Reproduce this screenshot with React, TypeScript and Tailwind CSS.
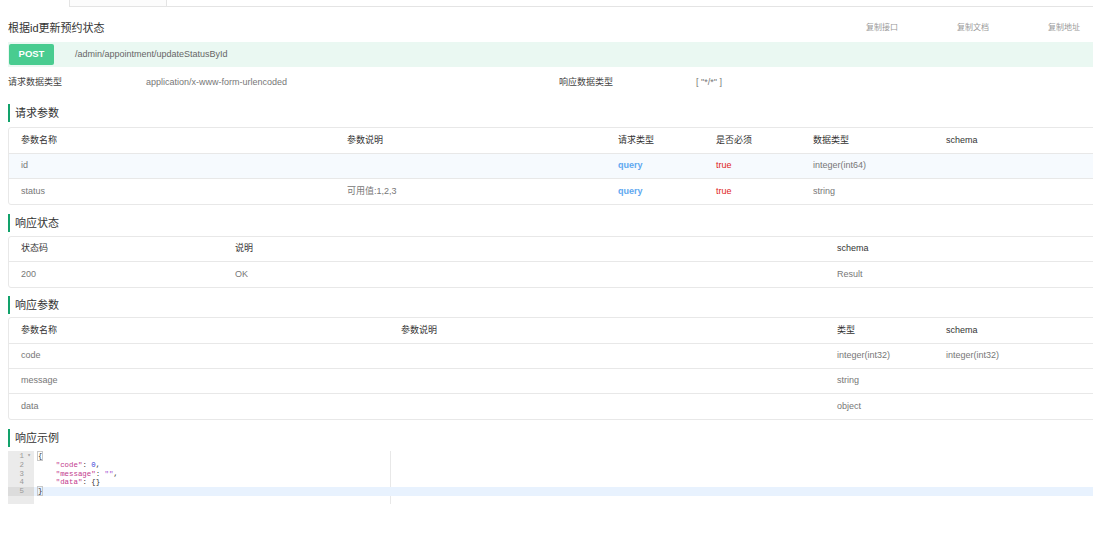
import React from "react";

const FONT = { fontFamily: '"Liberation Sans", "Noto Sans CJK SC", sans-serif' };
const MONO = { fontFamily: '"Liberation Mono", "DejaVu Sans Mono", monospace' };

function SectionTitle({ title, className }: { title: string; className: string }) {
  return (
    <div className={`flex items-center h-[18px] ${className}`}>
      <div className="w-[2px] h-full bg-[#12a26b]" />
      <span className="ml-[5px] text-[11px] leading-[18px] text-[#333]">{title}</span>
    </div>
  );
}

type Cell = { text: string; className?: string };

function Table({
  cols,
  head,
  rows,
  className,
  headH,
  highlight,
}: {
  cols: string;
  head: string[];
  rows: Cell[][];
  className: string;
  headH: string;
  highlight?: number;
}) {
  return (
    <div className={`w-[1100px] border border-[#e8e8e8] rounded-[3px] ${className}`}>
      <div className={`grid ${cols} ${headH} items-center pl-[12px] border-b border-[#e8e8e8] text-[9px] text-[#333]`}>
        {head.map((h, i) => (
          <div key={i}>{h}</div>
        ))}
      </div>
      {rows.map((r, ri) => (
        <div
          key={ri}
          className={`grid ${cols} h-[25px] items-center pl-[12px] text-[9px] text-[#777] ${ri < rows.length - 1 ? "border-b border-[#e8e8e8]" : ""} ${highlight === ri ? "bg-[#f6fafe]" : ""}`}
        >
          {r.map((c, ci) => (
            <div key={ci} className={c.className}>
              {c.text}
            </div>
          ))}
        </div>
      ))}
    </div>
  );
}

const codeLines = [
  <span className="text-[#333] outline outline-1 outline-[#c8c8c8]">{"{"}</span>,
  <>
    <span>{"    "}</span>
    <span className="text-[#c2398c]">"code"</span>
    <span className="text-[#333]">: </span>
    <span className="text-[#3b3bd6]">0</span>
    <span className="text-[#333]">,</span>
  </>,
  <>
    <span>{"    "}</span>
    <span className="text-[#c2398c]">"message"</span>
    <span className="text-[#333]">: </span>
    <span className="text-[#a64fd1]">""</span>
    <span className="text-[#333]">,</span>
  </>,
  <>
    <span>{"    "}</span>
    <span className="text-[#c2398c]">"data"</span>
    <span className="text-[#333]">: {"{}"}</span>
  </>,
  <span className="text-[#333] outline outline-1 outline-[#c8c8c8]">{"}"}</span>,
];

function Editor() {
  return (
    <div className="mt-[4px] ml-[8px] flex h-[53px] w-[1085px]" style={MONO}>
      <div className="w-[26px] bg-[#ebebeb] pt-[1px] text-[7.4px] leading-[8.75px] text-[#999]">
        {codeLines.map((_, i) => (
          <div key={i} className={`flex justify-end h-[8.75px] ${i === 4 ? "bg-[#dcdcdc]" : ""}`}>
            <span>{i + 1}</span>
            <span className="w-[10px] text-center text-[6px]">{i === 0 ? "▾" : ""}</span>
          </div>
        ))}
      </div>
      <div className="relative flex-1 pt-[1px] text-[7.4px] leading-[8.75px]">
        <div className="absolute left-[356px] top-0 bottom-0 w-[1px] bg-[#e8e8e8]" />
        {codeLines.map((l, i) => (
          <div key={i} className={`relative h-[8.75px] pl-[4px] whitespace-pre ${i === 4 ? "bg-[#e8f2fe]" : ""}`}>
            {l}
          </div>
        ))}
      </div>
    </div>
  );
}

export default function App() {
  const q = "text-[#5fa8f0] font-bold";
  const t = "text-[#e01b1b]";
  return (
    <div className="w-[1093px] h-[556px] overflow-hidden bg-white" style={FONT}>
      <div className="ml-[69px] h-[7px] border-b border-[#e4e4e4]">
        <div className="w-[98px] h-full border-l border-r border-[#e4e4e4] bg-[#fcfcfc]" />
      </div>

      <div className="flex items-start h-[35px] pt-[14px] pl-[8px]">
        <span className="text-[11px] leading-[14px] text-[#333]">根据id更新预约状态</span>
        <span className="ml-auto text-[8px] leading-[14px] text-[#999] mr-[59px]">复制接口</span>
        <span className="text-[8px] leading-[14px] text-[#999] mr-[59px]">复制文档</span>
        <span className="text-[8px] leading-[14px] text-[#999] mr-[13px]">复制地址</span>
      </div>

      <div className="ml-[8px] h-[25px] flex items-center bg-[#eaf8f2]">
        <div className="ml-[1px] w-[45px] h-[21px] bg-[#49cc90] rounded-[2px] flex items-center justify-center text-white text-[9.5px] font-bold">
          POST
        </div>
        <span className="ml-[21px] text-[9px] text-[#666]">/admin/appointment/updateStatusById</span>
      </div>

      <div className="h-[28px] flex items-center pt-[3px] pl-[8px] text-[9px] text-[#444]">
        <span className="w-[138px]">请求数据类型</span>
        <span className="w-[413px] text-[#777]">application/x-www-form-urlencoded</span>
        <span className="w-[137px]">响应数据类型</span>
        <span className="text-[#777]">[ "*/*" ]</span>
      </div>

      <div className="pl-[8px]">
        <SectionTitle title="请求参数" className="mt-[9px]" />
        <Table
          className="mt-[5px]"
          headH="h-[26px]"
          cols="grid-cols-[326px_271px_98px_97px_133px_1fr]"
          head={["参数名称", "参数说明", "请求类型", "是否必须", "数据类型", "schema"]}
          highlight={0}
          rows={[
            [{ text: "id" }, { text: "" }, { text: "query", className: q }, { text: "true", className: t }, { text: "integer(int64)" }, { text: "" }],
            [{ text: "status" }, { text: "可用值:1,2,3" }, { text: "query", className: q }, { text: "true", className: t }, { text: "string" }, { text: "" }],
          ]}
        />

        <SectionTitle title="响应状态" className="mt-[9px]" />
        <Table
          className="mt-[4px]"
          headH="h-[25px]"
          cols="grid-cols-[214px_602px_1fr]"
          head={["状态码", "说明", "schema"]}
          rows={[[{ text: "200" }, { text: "OK" }, { text: "Result" }]]}
        />

        <SectionTitle title="响应参数" className="mt-[8px]" />
        <Table
          className="mt-[3px]"
          headH="h-[26px]"
          cols="grid-cols-[380px_436px_109px_1fr]"
          head={["参数名称", "参数说明", "类型", "schema"]}
          rows={[
            [{ text: "code" }, { text: "" }, { text: "integer(int32)" }, { text: "integer(int32)" }],
            [{ text: "message" }, { text: "" }, { text: "string" }, { text: "" }],
            [{ text: "data" }, { text: "" }, { text: "object" }, { text: "" }],
          ]}
        />

        <SectionTitle title="响应示例" className="mt-[9px]" />
      </div>
      <Editor />
    </div>
  );
}
